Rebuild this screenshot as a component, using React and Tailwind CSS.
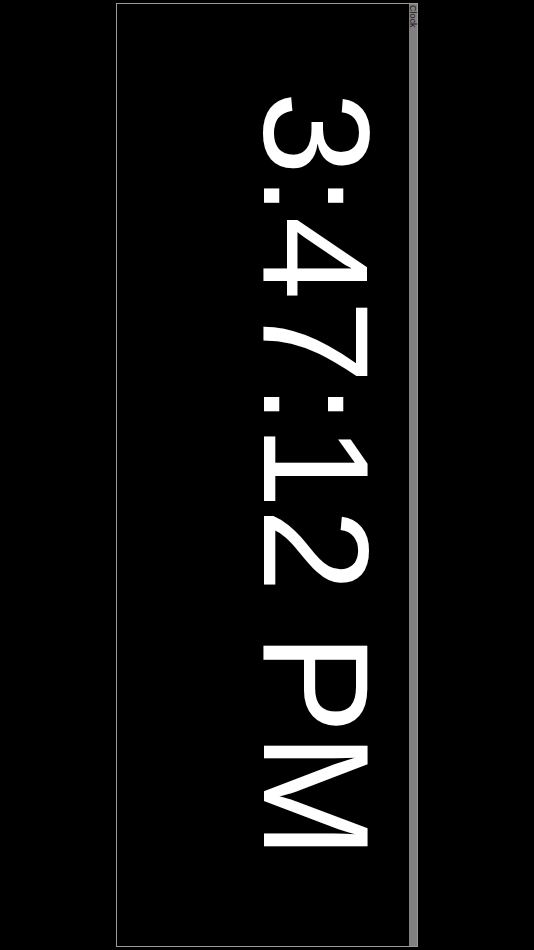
export default function App() {
  return (
    <div className="w-[534px] h-[950px] bg-black pt-[3px] pl-[116px] font-['Liberation_Sans']">
      <div className="w-[302px] h-[944px]">
        <div className="w-[944px] h-[302px] origin-top-left translate-x-[302px] rotate-90 flex flex-col border border-[#9a9a9a] bg-black">
          <div className="h-[8px] shrink-0 bg-[#808080] text-[9px] leading-[8px] text-[#1a1a1a] pl-[1px]">
            Clock
          </div>
          <div className="flex-1 pt-[18px] text-center text-white text-[150px] leading-none">
            3:47:12 PM
          </div>
        </div>
      </div>
    </div>
  );
}
